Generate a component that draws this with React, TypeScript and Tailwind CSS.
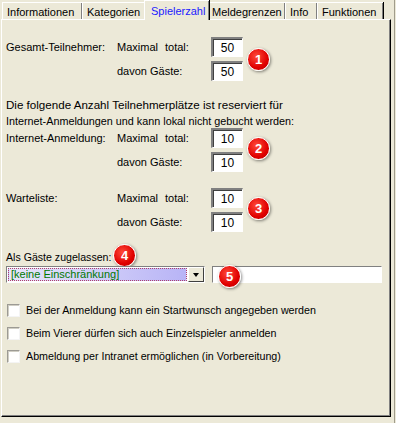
const FONT = "font-['Liberation_Sans',Arial,sans-serif] text-[11px] text-black";

type TabProps = { label: string; width: string; active?: boolean };

function Tab({ label, width, active }: TabProps) {
  if (active) {
    return (
      <div
        className={`relative z-10 -mx-[2px] -mb-px flex h-[20px] items-start border-l border-t border-white bg-[#ECE9D8] pl-[6px] pt-[2px] text-[#1a1aff] shadow-[inset_-1px_0_0_#808080,1px_0_0_#000] ${width}`}
      >
        {label}
      </div>
    );
  }
  return (
    <div
      className={`flex h-[17px] items-start border-l border-t border-white pl-[4px] pt-[1px] shadow-[inset_-1px_0_0_#808080,1px_0_0_#000] ${width}`}
    >
      {label}
    </div>
  );
}

function NumBox({ value }: { value: string }) {
  return (
    <div className="flex h-[20px] w-[32px] items-center justify-center border-b border-l-2 border-r border-t-2 border-b-white border-l-[#808080] border-r-white border-t-[#808080] bg-white text-[12px] shadow-[inset_1px_1px_0_#404040]">
      {value}
    </div>
  );
}

function Badge({ n, className }: { n: string; className: string }) {
  return (
    <div
      className={`absolute flex h-[23px] w-[23px] items-center justify-center rounded-full border-[1.5px] border-white bg-[radial-gradient(circle_at_40%_35%,#ff4a3a,#e00000_60%,#b80000)] text-[13px] font-bold text-white shadow-[1px_1px_3px_rgba(0,0,0,0.45)] ${className}`}
    >
      {n}
    </div>
  );
}

function LimitRows({ label, total, guests }: { label: string; total: string; guests: string }) {
  return (
    <div className="flex flex-col gap-[4px]">
      <div className="flex h-[20px] items-center">
        <div className="w-[111px]">{label}</div>
        <div className="w-[48px]">Maximal</div>
        <div className="w-[46px]">total:</div>
        <NumBox value={total} />
      </div>
      <div className="flex h-[20px] items-center">
        <div className="w-[111px]" />
        <div className="w-[94px]">davon Gäste:</div>
        <NumBox value={guests} />
      </div>
    </div>
  );
}

function Check({ label }: { label: string }) {
  return (
    <div className="flex h-[23px] items-center">
      <div className="ml-[1px] h-[13px] w-[13px] border border-b-[#f4f4f4] border-l-[#9c9a94] border-r-[#f4f4f4] border-t-[#9c9a94] bg-white shadow-[inset_1px_1px_0_#d0cec4]" />
      <span className="ml-[6px] text-[10.7px]">{label}</span>
    </div>
  );
}

export default function App() {
  return (
    <div className={`flex h-[423px] w-[396px] bg-[#ECE9D8] ${FONT}`}>
      <div className="flex w-[394px] flex-col pl-[1px]">
        {/* tab strip */}
        <div className="flex h-[19px] items-end pl-[1px]">
          <Tab label="Informationen" width="w-[80px]" />
          <Tab label="Kategorien" width="w-[64px]" />
          <Tab label="Spielerzahl" width="w-[65px]" active />
          <Tab label="Meldegrenzen" width="w-[78px]" />
          <Tab label="Info" width="w-[32px]" />
          <Tab label="Funktionen" width="w-[66px]" />
        </div>

        {/* page panel */}
        <div className="h-[398px] w-[390px] border-b border-l border-r border-t border-b-black border-l-white border-r-black border-t-white">
          <div className="h-full w-full border-b border-r border-b-[#808080] border-r-[#808080] pl-[4px] pt-[17px]">
            <div className="relative">
              <LimitRows label="Gesamt-Teilnehmer:" total="50" guests="50" />
              <Badge n="1" className="left-[241px] top-[11px]" />
            </div>

            <div className="mt-[16px] leading-[16px]">
              <div className="text-[11.6px]">Die folgende Anzahl Teilnehmerplätze ist reserviert für</div>
              <div className="text-[10.8px]">Internet-Anmeldungen und kann lokal nicht gebucht werden:</div>
            </div>
            <div className="relative -mt-px">
              <LimitRows label="Internet-Anmeldung:" total="10" guests="10" />
              <Badge n="2" className="left-[241px] top-[9px]" />
            </div>

            <div className="relative mt-[16px]">
              <LimitRows label="Warteliste:" total="10" guests="10" />
              <Badge n="3" className="left-[241px] top-[9px]" />
            </div>

            <div className="relative mt-[17px] h-[16px] text-[10.6px] leading-[16px]">
              Als Gäste zugelassen:
              <Badge n="4" className="left-[107px] -top-[5px]" />
            </div>
            <div className="relative mt-[1px] flex items-center">
              <div className="flex h-[17px] w-[199px] border border-b-white border-l-[#808080] border-r-white border-t-[#808080] bg-white">
                <div className="m-px flex flex-1 items-center border border-dotted border-[#b0406a] bg-[linear-gradient(90deg,#e8e6fb,#b8b4f6)] pl-[2px] text-[#007800]">
                  [keine Einschränkung]
                </div>
                <div className="flex w-[16px] items-center justify-center border border-b-[#404040] border-l-white border-r-[#404040] border-t-white bg-[#ECE9D8]">
                  <div className="h-0 w-0 border-l-[3.5px] border-r-[3.5px] border-t-[4px] border-l-transparent border-r-transparent border-t-black" />
                </div>
              </div>
              <div className="ml-[7px] h-[17px] w-[170px] border border-b-white border-l-[#808080] border-r-white border-t-[#808080] bg-white" />
              <Badge n="5" className="left-[212px] top-[-1px]" />
            </div>

            <div className="mt-[16px] flex flex-col">
              <Check label="Bei der Anmeldung kann ein Startwunsch angegeben werden" />
              <Check label="Beim Vierer dürfen sich auch Einzelspieler anmelden" />
              <Check label="Abmeldung per Intranet ermöglichen (in Vorbereitung)" />
            </div>
          </div>
        </div>
      </div>
      <div className="w-px bg-[#a09c8c]" />
    </div>
  );
}
